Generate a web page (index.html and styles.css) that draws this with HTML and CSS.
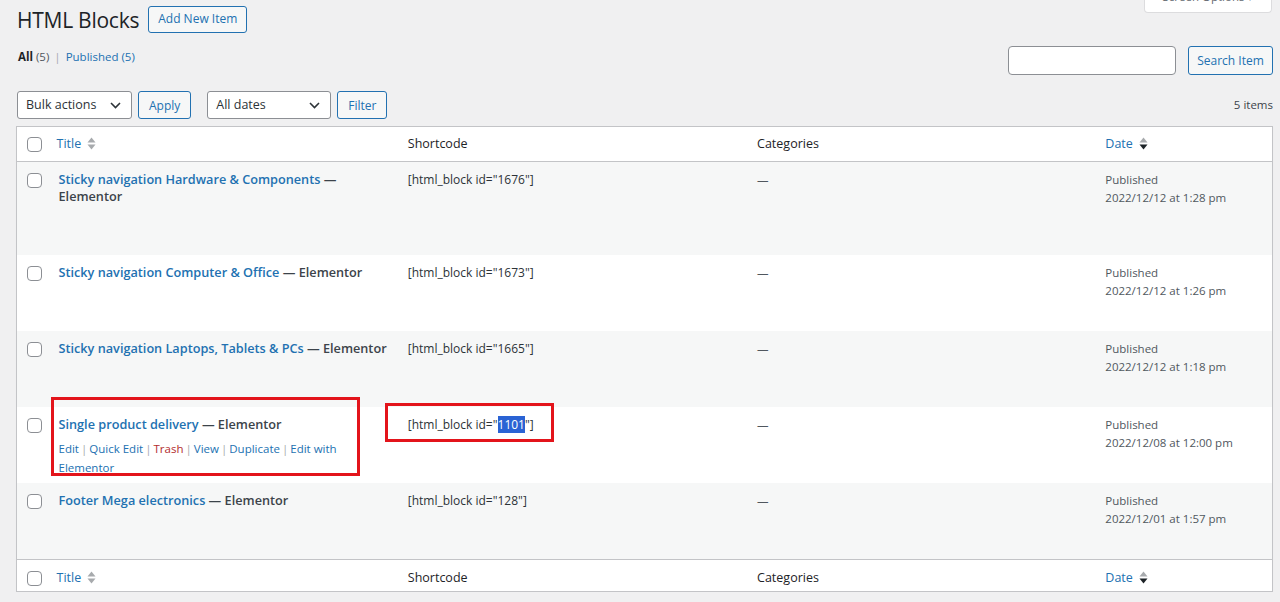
FILE: index.html
```html
<!DOCTYPE html>
<html>
  <head>
    <title>HTML Blocks</title>
    <meta name="viewport" content="width=device-width, initial-scale=1.0" />
    <link rel="stylesheet" href="styles.css">
  </head>
  <body>
    <div class="wrap">
      <div class="page-head">
        <div class="page-title">
          <h1>HTML Blocks</h1>
          <a class="button" href="#">Add New Item</a>
        </div>
        <button class="screen-options">Screen Options <span class="caret">&#9662;</span></button>
      </div>

      <div class="filter-bar">
        <ul class="views">
          <li class="current">All <span class="count">(5)</span></li>
          <li class="sep">|</li>
          <li><a href="#">Published <span class="count">(5)</span></a></li>
        </ul>
        <div class="search-box">
          <input type="search" class="search-input" />
          <button class="button">Search Item</button>
        </div>
      </div>

      <div class="tablenav">
        <div class="actions">
          <div class="select bulk">
            <span>Bulk actions</span>
            <svg width="11" height="7" viewBox="0 0 11 7"><path d="M1 1 L5.5 5.5 L10 1" fill="none" stroke="#2c3338" stroke-width="1.6"/></svg>
          </div>
          <button class="button">Apply</button>
          <div class="select dates">
            <span>All dates</span>
            <svg width="11" height="7" viewBox="0 0 11 7"><path d="M1 1 L5.5 5.5 L10 1" fill="none" stroke="#2c3338" stroke-width="1.6"/></svg>
          </div>
          <button class="button">Filter</button>
        </div>
        <span class="items-count">5 items</span>
      </div>

      <table class="list-table">
        <colgroup>
          <col class="w-cb" />
          <col class="w-title" />
          <col class="w-shortcode" />
          <col class="w-cat" />
          <col class="w-date" />
        </colgroup>
        <thead>
          <tr>
            <th class="col-cb"><span class="checkbox"></span></th>
            <th class="col-title sortable">
              <a href="#">Title</a>
              <svg class="sort" width="9" height="15" viewBox="0 0 9 15"><path d="M0.5 6.5 L4.5 1.5 L8.5 6.5 Z" fill="#a7aaad"/><path d="M0.5 8.5 L4.5 13.5 L8.5 8.5 Z" fill="#a7aaad"/></svg>
            </th>
            <th>Shortcode</th>
            <th>Categories</th>
            <th class="col-date sortable">
              <a href="#">Date</a>
              <svg class="sort" width="9" height="15" viewBox="0 0 9 15"><path d="M0.5 6.5 L4.5 1.5 L8.5 6.5 Z" fill="#a7aaad"/><path d="M0.5 8.5 L4.5 13.5 L8.5 8.5 Z" fill="#1d2327"/></svg>
            </th>
          </tr>
        </thead>
        <tbody>
          <tr>
            <td class="col-cb"><span class="checkbox"></span></td>
            <td class="col-title">
              <strong><a class="row-title" href="#">Sticky navigation Hardware &amp; Components</a> — Elementor</strong>
              <div class="row-actions"><a href="#">Edit</a><span class="sep">|</span><a href="#">Quick Edit</a><span class="sep">|</span><a class="trash" href="#">Trash</a><span class="sep">|</span><a href="#">View</a><span class="sep">|</span><a href="#">Duplicate</a><span class="sep">|</span><a href="#">Edit with Elementor</a></div>
            </td>
            <td class="col-shortcode">[html_block id="1676"]</td>
            <td class="col-cat">—</td>
            <td class="col-date">Published<br />2022/12/12 at 1:28 pm</td>
          </tr>
          <tr>
            <td class="col-cb"><span class="checkbox"></span></td>
            <td class="col-title">
              <strong><a class="row-title" href="#">Sticky navigation Computer &amp; Office</a> — Elementor</strong>
              <div class="row-actions"><a href="#">Edit</a><span class="sep">|</span><a href="#">Quick Edit</a><span class="sep">|</span><a class="trash" href="#">Trash</a><span class="sep">|</span><a href="#">View</a><span class="sep">|</span><a href="#">Duplicate</a><span class="sep">|</span><a href="#">Edit with Elementor</a></div>
            </td>
            <td class="col-shortcode">[html_block id="1673"]</td>
            <td class="col-cat">—</td>
            <td class="col-date">Published<br />2022/12/12 at 1:26 pm</td>
          </tr>
          <tr>
            <td class="col-cb"><span class="checkbox"></span></td>
            <td class="col-title">
              <strong><a class="row-title" href="#">Sticky navigation Laptops, Tablets &amp; PCs</a> — Elementor</strong>
              <div class="row-actions"><a href="#">Edit</a><span class="sep">|</span><a href="#">Quick Edit</a><span class="sep">|</span><a class="trash" href="#">Trash</a><span class="sep">|</span><a href="#">View</a><span class="sep">|</span><a href="#">Duplicate</a><span class="sep">|</span><a href="#">Edit with Elementor</a></div>
            </td>
            <td class="col-shortcode">[html_block id="1665"]</td>
            <td class="col-cat">—</td>
            <td class="col-date">Published<br />2022/12/12 at 1:18 pm</td>
          </tr>
          <tr>
            <td class="col-cb"><span class="checkbox"></span></td>
            <td class="col-title">
              <span class="mark-box mark-title"></span>
              <strong><a class="row-title" href="#">Single product delivery</a> — Elementor</strong>
              <div class="row-actions visible"><a href="#">Edit</a><span class="sep">|</span><a href="#">Quick Edit</a><span class="sep">|</span><a class="trash" href="#">Trash</a><span class="sep">|</span><a href="#">View</a><span class="sep">|</span><a href="#">Duplicate</a><span class="sep">|</span><a href="#">Edit with Elementor</a></div>
            </td>
            <td class="col-shortcode">
              <span class="mark-box mark-code"></span>
              [html_block id="<span class="selected">1101</span>"]
            </td>
            <td class="col-cat">—</td>
            <td class="col-date">Published<br />2022/12/08 at 12:00 pm</td>
          </tr>
          <tr>
            <td class="col-cb"><span class="checkbox"></span></td>
            <td class="col-title">
              <strong><a class="row-title" href="#">Footer Mega electronics</a> — Elementor</strong>
              <div class="row-actions"><a href="#">Edit</a><span class="sep">|</span><a href="#">Quick Edit</a><span class="sep">|</span><a class="trash" href="#">Trash</a><span class="sep">|</span><a href="#">View</a><span class="sep">|</span><a href="#">Duplicate</a><span class="sep">|</span><a href="#">Edit with Elementor</a></div>
            </td>
            <td class="col-shortcode">[html_block id="128"]</td>
            <td class="col-cat">—</td>
            <td class="col-date">Published<br />2022/12/01 at 1:57 pm</td>
          </tr>
        </tbody>
        <tfoot>
          <tr>
            <th class="col-cb"><span class="checkbox"></span></th>
            <th class="col-title sortable">
              <a href="#">Title</a>
              <svg class="sort" width="9" height="15" viewBox="0 0 9 15"><path d="M0.5 6.5 L4.5 1.5 L8.5 6.5 Z" fill="#a7aaad"/><path d="M0.5 8.5 L4.5 13.5 L8.5 8.5 Z" fill="#a7aaad"/></svg>
            </th>
            <th>Shortcode</th>
            <th>Categories</th>
            <th class="col-date sortable">
              <a href="#">Date</a>
              <svg class="sort" width="9" height="15" viewBox="0 0 9 15"><path d="M0.5 6.5 L4.5 1.5 L8.5 6.5 Z" fill="#a7aaad"/><path d="M0.5 8.5 L4.5 13.5 L8.5 8.5 Z" fill="#1d2327"/></svg>
            </th>
          </tr>
        </tfoot>
      </table>
    </div>
  </body>
</html>
```

FILE: styles.css
```css
body {
  margin: 0;
  background-color: #f0f0f1;
  color: #3c434a;
  font-family: "Open Sans", "Noto Sans", sans-serif;
  font-size: 11.5px;
  line-height: 1.4;
  overflow: hidden;
}

a {
  color: #2271b1;
  text-decoration: none;
}

.wrap {
  padding: 0 7px 0 16px;
}

/* Page heading */
.page-head {
  display: flex;
  justify-content: space-between;
  align-items: flex-start;
  height: 35px;
}

.page-title {
  display: flex;
  align-items: center;
  gap: 9px;
  margin-top: 5px;
}

h1 {
  margin: 0;
  padding-left: 1px;
  font-size: 21px;
  font-weight: 400;
  line-height: 30px;
  color: #1d2327;
  letter-spacing: -0.25px;
}

.button {
  display: inline-flex;
  align-items: center;
  justify-content: center;
  box-sizing: border-box;
  height: 28px;
  padding: 0 9px;
  border: 1px solid #2271b1;
  border-radius: 3px;
  background-color: #f6f7f7;
  color: #2271b1;
  font-family: inherit;
  font-size: 12px;
  white-space: nowrap;
  cursor: pointer;
}

.page-title .button {
  height: 27px;
  margin-top: -1px;
}

.screen-options {
  margin-top: -13px;
  margin-right: 1px;
  padding: 0 16px 5px 16px;
  width: 128px;
  line-height: 20px;
  border: 1px solid #dcdcde;
  border-top: none;
  border-radius: 0 0 4px 4px;
  background-color: #fff;
  color: #646970;
  font-family: inherit;
  font-size: 11.5px;
  white-space: nowrap;
}

/* Views and search */
.filter-bar {
  display: flex;
  justify-content: space-between;
  align-items: flex-start;
  margin-top: 11px;
}

.views {
  display: flex;
  gap: 5px;
  list-style: none;
  margin: 1px 0 0 2px;
  padding: 0;
  line-height: 20px;
  color: #50575e;
}

.views .current {
  color: #1d2327;
  font-weight: 700;
}

.views .current .count {
  font-weight: 400;
  color: #50575e;
}

.views .sep {
  color: #a7aaad;
}

.search-box {
  display: flex;
  gap: 12px;
}

.search-input {
  box-sizing: border-box;
  width: 168px;
  height: 29px;
  border: 1px solid #8c8f94;
  border-radius: 4px;
  background-color: #fff;
  margin: 0;
}

.search-box .button {
  height: 29px;
  width: 85px;
  padding: 0;
}

/* Table navigation */
.tablenav {
  display: flex;
  justify-content: space-between;
  align-items: center;
  margin-top: 16px;
  height: 28px;
  margin-bottom: 7px;
}

.actions {
  display: flex;
  align-items: center;
  gap: 6px;
  padding-left: 1px;
}

.actions .button {
  padding: 0 10px;
}

.select {
  display: flex;
  justify-content: space-between;
  align-items: center;
  box-sizing: border-box;
  height: 28px;
  padding: 0 10px 0 8px;
  border: 1px solid #8c8f94;
  border-radius: 3px;
  background-color: #fff;
  color: #2c3338;
  font-size: 12.5px;
}

.select.bulk {
  width: 115px;
}

.select.dates {
  width: 124px;
  margin-left: 10px;
}

.items-count {
  color: #3c434a;
  font-size: 11.5px;
}

/* List table */
.list-table {
  width: 100%;
  table-layout: fixed;
  border-collapse: collapse;
  border: 1px solid #c3c4c7;
  background-color: #fff;
  box-shadow: 0 1px 1px rgba(0, 0, 0, 0.04);
}

.w-cb { width: 34px; }
.w-title { width: 349px; }
.w-shortcode { width: 349px; }
.w-cat { width: 348px; }
.w-date { width: 175px; }

.list-table th {
  text-align: left;
  font-weight: 400;
  font-size: 12.5px;
  color: #1d2327;
  line-height: 19px;
  padding: 7px 8px 8px 8px;
}

.list-table thead th {
  border-bottom: 1px solid #c3c4c7;
}

.list-table tfoot th {
  border-top: 1px solid #c3c4c7;
  padding: 8px 8px 4px 8px;
}

.list-table th.col-title {
  padding-left: 6px;
}

.list-table th a {
  color: #2271b1;
}

.sort {
  vertical-align: -3px;
  margin-left: 3px;
}

.list-table td {
  vertical-align: top;
  padding: 9px 8px 6px 8px;
  line-height: 18px;
}

.list-table tbody tr:nth-child(odd) {
  background-color: #f6f7f7;
}

.list-table .col-cb {
  padding-left: 10px;
  padding-right: 0;
}

.checkbox {
  display: block;
  box-sizing: border-box;
  width: 15px;
  height: 15px;
  margin-top: 2px;
  border: 1px solid #8c8f94;
  border-radius: 4px;
  background-color: #fff;
}

.col-title {
  position: relative;
}

.col-title strong {
  display: block;
  font-weight: 600;
  font-size: 12.7px;
  line-height: 17px;
  color: #3c434a;
}

.row-actions {
  visibility: hidden;
  padding-top: 6px;
  line-height: 19px;
  font-size: 11.5px;
  color: #a7aaad;
}

.row-actions .sep {
  margin: 0 2px;
}

.row-actions.visible {
  visibility: visible;
}

.row-actions .trash {
  color: #b32d2e;
}

.col-shortcode {
  position: relative;
  color: #2c3338;
  font-size: 12px;
}

.col-cat {
  color: #50575e;
}

.col-date {
  color: #50575e;
  line-height: 18.5px;
}

.selected {
  background-color: #2a63d4;
  color: #fff;
}

/* Annotation boxes */
.mark-box {
  position: absolute;
  box-sizing: border-box;
  border: 3px solid #e3141b;
}

.mark-title {
  top: -10px;
  left: 0;
  width: 309px;
  height: 79px;
}

.mark-code {
  top: -4px;
  left: -15px;
  width: 169px;
  height: 39px;
}
```
